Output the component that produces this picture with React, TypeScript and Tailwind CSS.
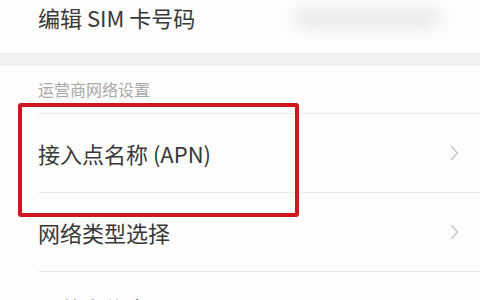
import React from 'react'

const font = { fontFamily: '"Noto Sans CJK SC", "Noto Sans", sans-serif' }

function Chevron() {
  return (
    <svg width="9" height="16" viewBox="0 0 9 16" fill="none" className="shrink-0">
      <path d="M1.5 1.5 L7.5 8 L1.5 14.5" stroke="#c4c4c4" strokeWidth="1.4" strokeLinecap="round" strokeLinejoin="round" />
    </svg>
  )
}

function Row({ label, last }: { label: string; last?: boolean }) {
  return (
    <div>
      <div className="ml-[38px] h-px bg-[#ebebeb]" />
      <div className={`flex pl-[38px] pr-[21px] h-[78px] ${last ? 'items-start pt-[25px]' : 'items-center'}`}>
        <span className="flex-1 text-[22px] text-[#383838] leading-none">{label}</span>
        {!last && <Chevron />}
      </div>
    </div>
  )
}

export default function App() {
  return (
    <div className="relative w-[480px] h-[300px] overflow-hidden bg-[#fdfdfd]" style={font}>
      {/* Edit SIM row (cut off at top) */}
      <div className="flex items-start h-[53px] pl-[38px]">
        <span className="text-[22px] text-[#383838] leading-[34px]">编辑 SIM 卡号码</span>
        <div className="ml-auto mr-[40px] mt-[7px] w-[146px] h-[22px] rounded-full bg-[#ebebeb] blur-[7px]" />
      </div>

      {/* Section gap */}
      <div className="h-[12px] bg-[#f1f1f1] border-y border-[#ececec]" />

      {/* Section header */}
      <div className="flex items-center h-[48px] pl-[38px]">
        <span className="text-[16px] text-[#a8a8a8] leading-none">运营商网络设置</span>
      </div>

      <Row label="接入点名称 (APN)" />
      <Row label="网络类型选择" />
      <Row label="运营商信息" last />

      {/* Highlight box */}
      <div className="absolute left-[18px] top-[103px] w-[281px] h-[114px] border-4 border-[#d1141d] rounded-[3px]" />
    </div>
  )
}
